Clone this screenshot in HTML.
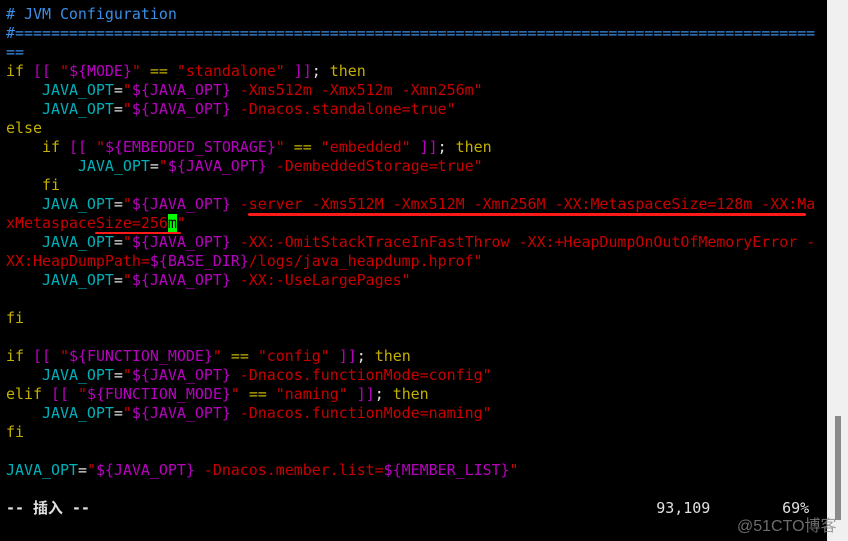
<!DOCTYPE html>
<html><head><meta charset="utf-8"><style>
body{margin:0;background:#000;width:848px;height:541px;overflow:hidden;position:relative}
pre{margin:0;position:absolute;left:6px;top:5px;font:15px/19px "DejaVu Sans Mono","Liberation Mono","Noto Sans CJK SC",monospace;letter-spacing:-0.04px;color:#e0e0e0}
.c{color:#3b8ee6}.y{color:#c4b000}.m{color:#b800c0}.r{color:#c80000}.t{color:#00b0b8}.w{color:#e8e8e8}
.cur{background:#00ff00;color:#000}
.sb{position:absolute;left:827px;top:0;width:21px;height:541px;background:#f0f0f0}
.th{position:absolute;left:835px;top:416px;width:6px;height:104px;background:#8a8a8a}
.ul{position:absolute;background:#ff1a1a;height:3px;border-radius:2px}
.wm{position:absolute;left:737px;top:512px;font:16px "Liberation Sans","Noto Sans CJK SC",sans-serif;color:#888;opacity:.8}
</style></head><body>
<pre><span class="c"># JVM Configuration
#=========================================================================================
==</span>
<span class="y">if</span> <span class="m">[[</span> <span class="r">"</span><span class="m">${MODE}</span><span class="r">"</span> <span class="y">==</span> <span class="r">"standalone"</span> <span class="m">]]</span>; <span class="y">then</span>
    <span class="t">JAVA_OPT</span>=<span class="r">"</span><span class="m">${JAVA_OPT}</span><span class="r"> -Xms512m -Xmx512m -Xmn256m"</span>
    <span class="t">JAVA_OPT</span>=<span class="r">"</span><span class="m">${JAVA_OPT}</span><span class="r"> -Dnacos.standalone=true"</span>
<span class="y">else</span>
    <span class="y">if</span> <span class="m">[[</span> <span class="r">"</span><span class="m">${EMBEDDED_STORAGE}</span><span class="r">"</span> <span class="y">==</span> <span class="r">"embedded"</span> <span class="m">]]</span>; <span class="y">then</span>
        <span class="t">JAVA_OPT</span>=<span class="r">"</span><span class="m">${JAVA_OPT}</span><span class="r"> -DembeddedStorage=true"</span>
    <span class="y">fi</span>
    <span class="t">JAVA_OPT</span>=<span class="r">"</span><span class="m">${JAVA_OPT}</span><span class="r"> -server -Xms512M -Xmx512M -Xmn256M -XX:MetaspaceSize=128m -XX:Ma
xMetaspaceSize=256</span><span class="cur">m</span><span class="r">"</span>
    <span class="t">JAVA_OPT</span>=<span class="r">"</span><span class="m">${JAVA_OPT}</span><span class="r"> -XX:-OmitStackTraceInFastThrow -XX:+HeapDumpOnOutOfMemoryError -
XX:HeapDumpPath=</span><span class="m">${BASE_DIR}</span><span class="r">/logs/java_heapdump.hprof"</span>
    <span class="t">JAVA_OPT</span>=<span class="r">"</span><span class="m">${JAVA_OPT}</span><span class="r"> -XX:-UseLargePages"</span>

<span class="y">fi</span>

<span class="y">if</span> <span class="m">[[</span> <span class="r">"</span><span class="m">${FUNCTION_MODE}</span><span class="r">"</span> <span class="y">==</span> <span class="r">"config"</span> <span class="m">]]</span>; <span class="y">then</span>
    <span class="t">JAVA_OPT</span>=<span class="r">"</span><span class="m">${JAVA_OPT}</span><span class="r"> -Dnacos.functionMode=config"</span>
<span class="y">elif</span> <span class="m">[[</span> <span class="r">"</span><span class="m">${FUNCTION_MODE}</span><span class="r">"</span> <span class="y">==</span> <span class="r">"naming"</span> <span class="m">]]</span>; <span class="y">then</span>
    <span class="t">JAVA_OPT</span>=<span class="r">"</span><span class="m">${JAVA_OPT}</span><span class="r"> -Dnacos.functionMode=naming"</span>
<span class="y">fi</span>

<span class="t">JAVA_OPT</span>=<span class="r">"</span><span class="m">${JAVA_OPT}</span><span class="r"> -Dnacos.member.list=</span><span class="m">${MEMBER_LIST}</span><span class="r">"</span>

<b>-- 插入 --</b>                                                               93,109        69%</pre>
<div class="ul" style="left:248px;top:213px;width:558px"></div>
<div class="ul" style="left:95px;top:232px;width:86px;height:2px"></div>
<div class="sb"></div><div class="th"></div>
<div class="wm">@51CTO博客</div>
</body></html>
